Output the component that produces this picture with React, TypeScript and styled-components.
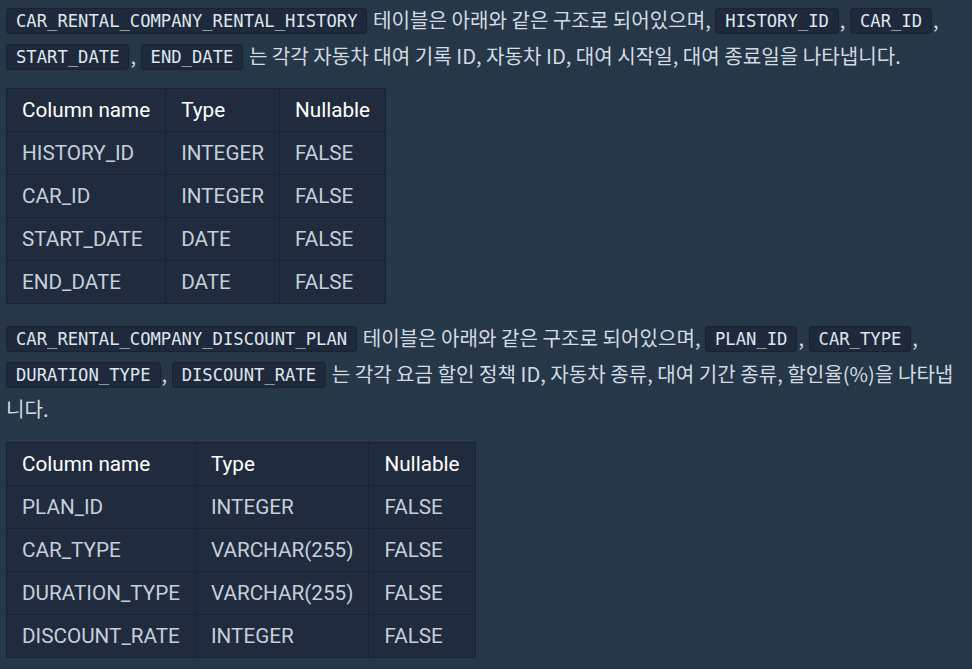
import React from "react";
import styled, { createGlobalStyle } from "styled-components";

const Global = createGlobalStyle`
  html, body { margin: 0; padding: 0; background: #263747; }
  body { width: 972px; height: 669px; overflow: hidden; }
`;

const Page = styled.div`
  padding: 2px 6px 0 6px;
  color: #d2dbe4;
  font-family: "Noto Sans CJK KR", "Noto Sans", sans-serif;
  font-size: 20.1px;
  line-height: 35.5px;
`;

const Para = styled.p`
  margin: 0 0 15px 0;
`;

const Code = styled.code`
  font-family: "DejaVu Sans Mono", "Liberation Mono", monospace;
  font-size: 17.2px;
  line-height: 20px;
  color: #dfe6ee;
  background: #1e2a3b;
  border: 1px solid #172233;
  border-radius: 4px;
  padding: 2px 9px;
  margin-right: 1px;
  vertical-align: 1px;
`;

const Table = styled.table`
  border-collapse: collapse;
  background: #202b3d;
  margin: 0 0 16px 0;
  font-family: Roboto, "Noto Sans", sans-serif;
  font-size: 20.7px;
`;

const Th = styled.th`
  border: 1px solid #172334;
  color: #ffffff;
  font-weight: 400;
  text-align: left;
  padding: 0 15px;
  height: 42px;
  line-height: 30px;
  white-space: nowrap;
`;

const Td = styled.td`
  border: 1px solid #172334;
  color: #c4d0db;
  padding: 0 15px;
  height: 42px;
  line-height: 30px;
  white-space: nowrap;
`;

type Row = [string, string, string];

const DataTable = ({ rows }: { rows: Row[] }) => (
  <Table>
    <thead>
      <tr>
        <Th>Column name</Th>
        <Th>Type</Th>
        <Th>Nullable</Th>
      </tr>
    </thead>
    <tbody>
      {rows.map((r) => (
        <tr key={r[0]}>
          <Td>{r[0]}</Td>
          <Td>{r[1]}</Td>
          <Td>{r[2]}</Td>
        </tr>
      ))}
    </tbody>
  </Table>
);

const history: Row[] = [
  ["HISTORY_ID", "INTEGER", "FALSE"],
  ["CAR_ID", "INTEGER", "FALSE"],
  ["START_DATE", "DATE", "FALSE"],
  ["END_DATE", "DATE", "FALSE"],
];

const plan: Row[] = [
  ["PLAN_ID", "INTEGER", "FALSE"],
  ["CAR_TYPE", "VARCHAR(255)", "FALSE"],
  ["DURATION_TYPE", "VARCHAR(255)", "FALSE"],
  ["DISCOUNT_RATE", "INTEGER", "FALSE"],
];

export default function App() {
  return (
    <>
      <Global />
      <Page>
        <Para>
          <Code>CAR_RENTAL_COMPANY_RENTAL_HISTORY</Code> 테이블은 아래와 같은 구조로 되어있으며,{" "}
          <Code>HISTORY_ID</Code>, <Code>CAR_ID</Code>, <Code>START_DATE</Code>, <Code>END_DATE</Code> 는 각각
          자동차 대여 기록 ID, 자동차 ID, 대여 시작일, 대여 종료일을 나타냅니다.
        </Para>
        <DataTable rows={history} />
        <Para>
          <Code>CAR_RENTAL_COMPANY_DISCOUNT_PLAN</Code> 테이블은 아래와 같은 구조로 되어있으며,{" "}
          <Code>PLAN_ID</Code>, <Code>CAR_TYPE</Code>, <Code>DURATION_TYPE</Code>, <Code>DISCOUNT_RATE</Code> 는
          각각 요금 할인 정책 ID, 자동차 종류, 대여 기간 종류, 할인율(%)을 나타냅니다.
        </Para>
        <DataTable rows={plan} />
      </Page>
    </>
  );
}
